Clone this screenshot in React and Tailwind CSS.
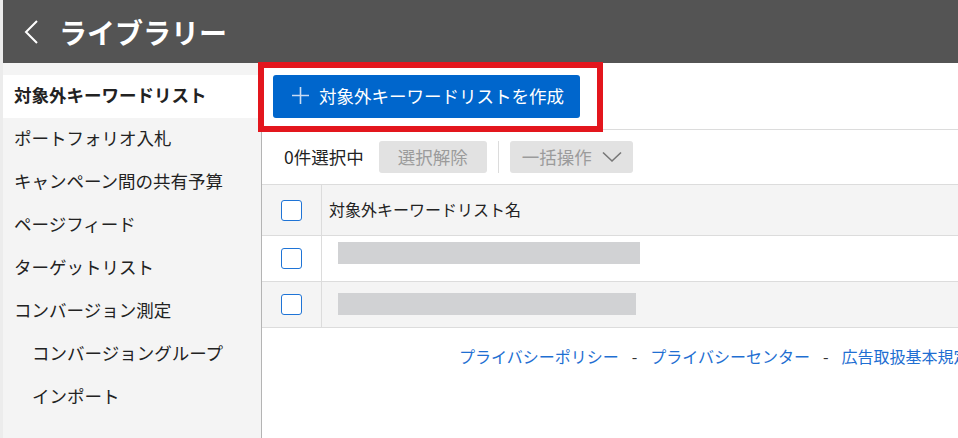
import React from 'react';

const MENU = [
  { label: '対象外キーワードリスト', active: true },
  { label: 'ポートフォリオ入札' },
  { label: 'キャンペーン間の共有予算' },
  { label: 'ページフィード' },
  { label: 'ターゲットリスト' },
  { label: 'コンバージョン測定' },
  { label: 'コンバージョングループ', sub: true },
  { label: 'インポート', sub: true },
];

const ROWS = [
  { w: 302, top: 'pt-[6px]' },
  { w: 298, top: 'pt-[11px]' },
];

function Checkbox() {
  return <div className="w-[21px] h-[21px] rounded-[3px] border-[1.5px] border-[#1f74d6] bg-white" />;
}

export default function App() {
  return (
    <div
      className="relative w-[958px] h-[438px] overflow-hidden border-l-[3px] border-[#ececec] bg-white text-[#222]"
      style={{ fontFamily: '"Noto Sans CJK JP", "Noto Sans", sans-serif' }}
    >
      {/* ヘッダー */}
      <header className="h-[63px] bg-[#545454] flex items-center">
        <svg width="16" height="24" viewBox="0 0 16 24" className="ml-[20px]">
          <path d="M14 1 L3 12 L14 23" fill="none" stroke="#fff" strokeWidth="2" />
        </svg>
        <h1 className="ml-[20px] text-[28px] font-bold text-white leading-none">ライブラリー</h1>
      </header>

      <div className="flex h-[375px]">
        {/* サイドメニュー */}
        <aside className="w-[259px] shrink-0 bg-[#f4f4f4] border-r border-[#b4b4b4] pt-[12px]">
          {MENU.map((m) => (
            <div
              key={m.label}
              className={`h-[43px] flex items-center pb-[4px] text-[17.5px] leading-none ${m.sub ? 'pl-[29px]' : 'pl-[11px]'} ${
                m.active ? 'bg-white font-bold' : ''
              }`}
            >
              {m.label}
            </div>
          ))}
        </aside>

        {/* メイン */}
        <main className="flex-1 min-w-0">
          <div className="h-[67px] pt-[12px] pl-[11px] border-b border-[#dcdcdc]">
            <button className="h-[43px] w-[307px] rounded-[3px] bg-[#0066cc] flex items-center pl-[18px] pb-[2px] text-white text-[17.5px] leading-none">
              <svg width="19" height="19" viewBox="0 0 19 19" className="mr-[9px]">
                <path d="M9.5 1 V18 M1 9.5 H18" stroke="#c9dcf3" strokeWidth="1.6" />
              </svg>
              対象外キーワードリストを作成
            </button>
          </div>

          <div className="h-[55px] flex items-center pl-[22px] border-b border-[#dcdcdc]">
            <span className="text-[17.5px] leading-none">0件選択中</span>
            <div className="ml-[15px] h-[32px] px-[19px] rounded-[3px] bg-[#e2e2e2] text-[#9b9b9b] text-[17.5px] flex items-center">
              選択解除
            </div>
            <div className="ml-[11px] w-px h-[32px] bg-[#dcdcdc]" />
            <div className="ml-[11px] h-[32px] w-[123px] pl-[12px] rounded-[3px] bg-[#e2e2e2] text-[#9b9b9b] text-[17.5px] flex items-center">
              一括操作
              <svg width="20" height="12" viewBox="0 0 20 12" className="ml-[10px]">
                <path d="M1 1.5 L10 10 L19 1.5" fill="none" stroke="#777" strokeWidth="1.6" />
              </svg>
            </div>
          </div>

          {/* テーブル */}
          <div className="flex h-[51px] bg-[#f4f4f4] border-b border-[#dcdcdc]">
            <div className="w-[60px] flex items-center justify-center border-r border-[#dcdcdc]">
              <Checkbox />
            </div>
            <div className="flex items-center pl-[7px] pb-[2px] text-[16px]">対象外キーワードリスト名</div>
          </div>
          {ROWS.map((r, i) => (
            <div
              key={i}
              className={`flex h-[46px] border-b border-[#dcdcdc] ${i === 1 ? 'bg-[#f4f4f4]' : 'bg-white'}`}
            >
              <div className="w-[60px] flex items-center justify-center border-r border-[#dcdcdc]">
                <Checkbox />
              </div>
              <div className={`pl-[16px] ${r.top}`}>
                <div className="h-[22px] bg-[#d1d2d4]" style={{ width: r.w }} />
              </div>
            </div>
          ))}

          <div className="pl-[197px] pt-[16px] flex items-center text-[16px] text-[#1f6fd2] whitespace-nowrap">
            <span>プライバシーポリシー</span>
            <span className="mx-[13px] text-[#333]">-</span>
            <span>プライバシーセンター</span>
            <span className="mx-[13px] text-[#333]">-</span>
            <span>広告取扱基本規定</span>
          </div>
        </main>
      </div>

      {/* 注釈の赤枠 */}
      <div className="absolute left-[255px] top-[62px] w-[345px] h-[70px] border-[6px] border-[#e3161d] pointer-events-none" />
    </div>
  );
}
